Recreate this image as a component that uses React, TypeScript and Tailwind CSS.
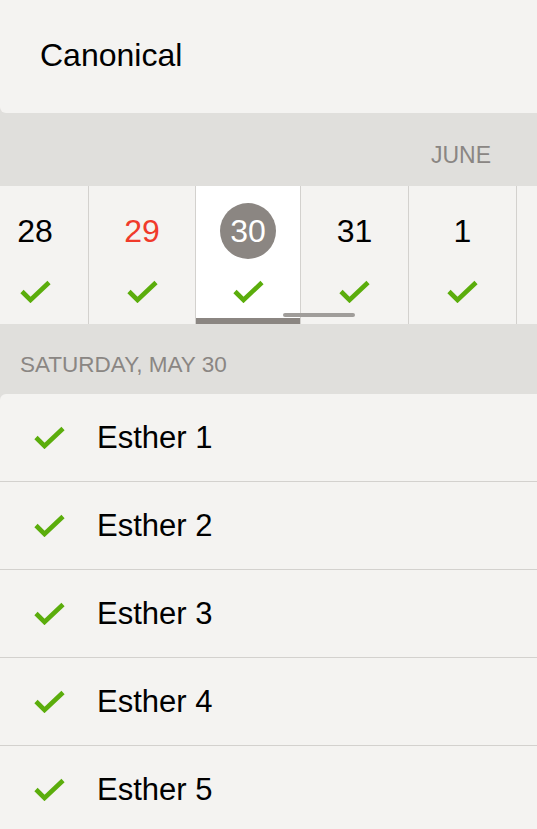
import React from "react";

const Check = () => (
  <svg width="31" height="23" viewBox="0 0 31 23" className="block">
    <polyline
      points="2,11.5 10.5,20 29,2.5"
      fill="none"
      stroke="#5bad0c"
      strokeWidth="4.6"
      strokeLinejoin="miter"
      strokeLinecap="butt"
    />
  </svg>
);

const days = [
  { n: "28", w: "w-[107px] -ml-[18px]", kind: "normal" },
  { n: "29", w: "w-[107px]", kind: "red" },
  { n: "30", w: "w-[105px]", kind: "selected" },
  { n: "31", w: "w-[108px]", kind: "normal" },
  { n: "1", w: "w-[108px]", kind: "normal" },
  { n: "", w: "w-[108px]", kind: "empty" },
];

export default function App() {
  return (
    <div
      className="w-[537px] h-[829px] overflow-hidden bg-[#e0dfdc] flex flex-col"
      style={{ fontFamily: '"Liberation Sans", Arial, sans-serif' }}
    >
      {/* Header */}
      <div className="h-[113px] shrink-0 bg-[#f4f3f1] rounded-bl-[6px] flex items-center pl-[40px] pb-[4px]">
        <span className="text-[32px] text-black leading-none">Canonical</span>
      </div>

      {/* Month band */}
      <div className="h-[73px] shrink-0 flex items-end justify-end pr-[46px] pb-[19px]">
        <span className="text-[23px] leading-none text-[#8a8683]">JUNE</span>
      </div>

      {/* Date strip */}
      <div className="relative h-[138px] shrink-0 flex bg-[#f4f3f1] overflow-hidden">
        {days.map((d, i) => (
          <div
            key={i}
            className={`${d.w} shrink-0 relative h-full flex flex-col items-center border-r border-[#d3d1ce] ${
              d.kind === "selected" ? "bg-white" : ""
            }`}
          >
            {d.kind !== "empty" && (
              <>
                <div className="h-[88px] flex items-center justify-center pt-[1px]">
                  {d.kind === "selected" ? (
                    <div className="w-[56px] h-[56px] rounded-full bg-[#8b8682] flex items-center justify-center">
                      <span className="text-[32px] leading-none text-white">{d.n}</span>
                    </div>
                  ) : (
                    <span
                      className={`text-[32px] leading-none ${
                        d.kind === "red" ? "text-[#f03a2b]" : "text-black"
                      }`}
                    >
                      {d.n}
                    </span>
                  )}
                </div>
                <div className="flex items-start justify-center pt-[6px]">
                  <Check />
                </div>
              </>
            )}
            {d.kind === "selected" && (
              <div className="absolute left-0 right-0 bottom-0 h-[6px] bg-[#8b8682]" />
            )}
          </div>
        ))}
        <div className="absolute left-[283px] top-[127px] w-[72px] h-[4px] rounded-full bg-[#a09d9a]" />
      </div>

      {/* Section header */}
      <div className="h-[70px] shrink-0 flex items-center pl-[20px] pt-[13px]">
        <span className="text-[22.5px] leading-none text-[#8a8683]">SATURDAY, MAY 30</span>
      </div>

      {/* List */}
      <div className="flex-1 bg-[#f4f3f1] rounded-tl-[6px]">
        {[1, 2, 3, 4, 5].map((n) => (
          <div
            key={n}
            className="h-[88px] flex items-center border-b border-[#d3d1ce]"
          >
            <div className="w-[97px] shrink-0 flex justify-start pl-[34px]">
              <Check />
            </div>
            <span className="text-[31px] leading-none text-black">Esther {n}</span>
          </div>
        ))}
      </div>
    </div>
  );
}
